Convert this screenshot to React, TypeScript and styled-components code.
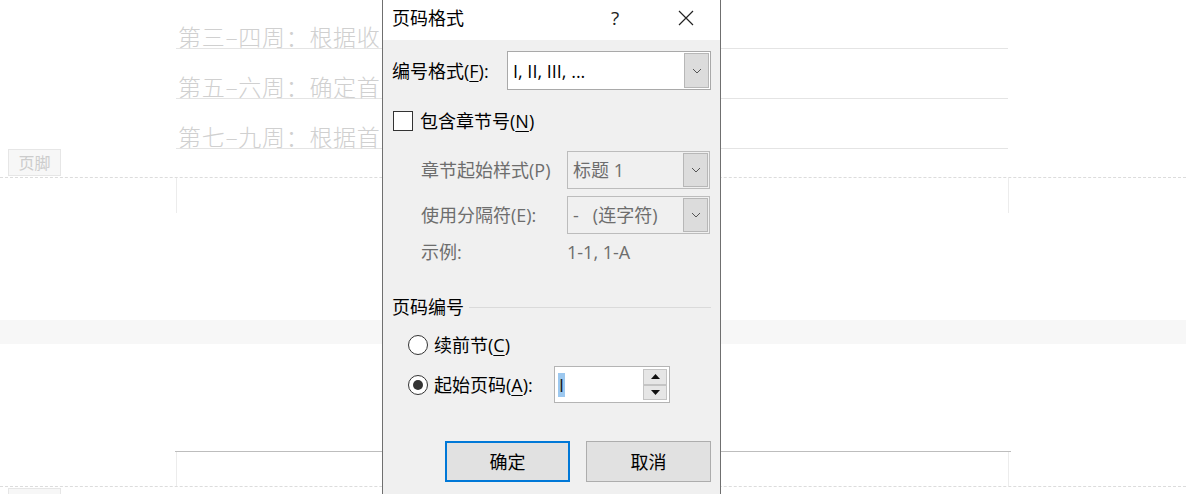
import React, { FC } from 'react';
import styled, { createGlobalStyle } from 'styled-components';

const GlobalStyle = createGlobalStyle`
    html, body {
        margin: 0;
        padding: 0;
        background: #ffffff;
    }
`

const UI_FONT = `"Open Sans", "Noto Sans CJK SC", sans-serif`;
const DOC_FONT = `"Noto Sans CJK SC", sans-serif`;

const Root = styled.div`
    position: relative;
    width: 1186px;
    height: 494px;
    overflow: hidden;
    background-color: #ffffff;
`

/* ---------- document behind the dialog ---------- */

const Doc = styled.div`
    display: flex;
    flex-direction: column;
`

const Lines = styled.div`
    margin-top: -1px;
    margin-left: 176px;
    width: 832px;
    display: flex;
    flex-direction: column;
`

const Line = styled.div`
    height: 49px;
    border-bottom: 1px solid #e4e4e4;
    display: flex;
    align-items: flex-end;
    padding-left: 2px;
    font-family: ${DOC_FONT};
    font-size: 23px;
    font-weight: 300;
    letter-spacing: 0.7px;
    line-height: 24px;
    color: #d0d0d0;
    white-space: pre;
`

const TagBar = styled.div<{ $dashed: 'top' | 'bottom' }>`
    height: 27px;
    display: flex;
    align-items: ${p => (p.$dashed === 'bottom' ? 'flex-end' : 'flex-start')};
    border-${p => p.$dashed}: 1px dashed #dcdcdc;
    padding-${p => (p.$dashed === 'top' ? 'top' : 'bottom')}: 1px;
`

const Tag = styled.div`
    margin-left: 8px;
    width: 51px;
    height: 25px;
    border: 1px solid #e6e6e6;
    background-color: #f7f7f7;
    color: #cccccc;
    font-family: ${DOC_FONT};
    font-size: 16px;
    line-height: 25px;
    text-align: center;
`

const PageMargin = styled.div<{ $height: number }>`
    margin-left: 176px;
    width: 831px;
    height: ${p => p.$height}px;
    border-left: 1px solid #ececec;
    border-right: 1px solid #ececec;
`

const PageBreak = styled.div`
    margin-top: 107px;
    height: 24px;
    background-color: #f7f7f7;
`

const NextPage = styled.div`
    margin-top: 107px;
    margin-left: 175px;
    width: 836px;
    border-top: 1px solid #bdbdbd;
    ${PageMargin} {
        margin-left: 1px;
    }
`

/* ---------- dialog ---------- */

const Dialog = styled.div`
    position: absolute;
    left: 382px;
    top: -1px;
    width: 337px;
    height: 520px;
    border: 1px solid #6f6f6f;
    background-color: #f0f0f0;
    font-family: ${UI_FONT};
    font-size: 18px;
    color: #000000;
    display: flex;
    flex-direction: column;
`

const TitleBar = styled.div`
    height: 40px;
    background-color: #ffffff;
    display: flex;
    align-items: center;
    padding-left: 9px;
    padding-bottom: 5px;
    box-sizing: border-box;
`

const Title = styled.div`
    flex: 1;
    line-height: 24px;
`

const HelpButton = styled.div`
    width: 20px;
    margin-right: 47px;
    font-size: 19px;
    line-height: 24px;
    color: #222;
`

const CloseButton = styled.div`
    width: 16px;
    height: 16px;
    margin-right: 26px;
    display: flex;
`

const Body = styled.div`
    padding: 11px 9px 0 9px;
    display: flex;
    flex-direction: column;
`

const Row = styled.div<{ $height: number; $top?: number }>`
    height: ${p => p.$height}px;
    margin-top: ${p => p.$top ?? 0}px;
    display: flex;
    align-items: center;
`

const Label = styled.span<{ $disabled?: boolean; $width?: number }>`
    line-height: 22px;
    white-space: nowrap;
    color: ${p => (p.$disabled ? '#6d6d6d' : '#000000')};
    ${p => (p.$width ? `width: ${p.$width}px;` : '')}
    u {
        text-decoration-thickness: 1px;
        text-underline-offset: 3px;
    }
`

const Combo = styled.div<{ $width: number; $disabled?: boolean }>`
    margin-left: auto;
    width: ${p => p.$width}px;
    height: 100%;
    box-sizing: border-box;
    border: 1px solid ${p => (p.$disabled ? '#bcbcbc' : '#a9a9a9')};
    background-color: ${p => (p.$disabled ? '#f0f0f0' : '#ffffff')};
    display: flex;
    align-items: center;
    padding: 1px;
`

const ComboText = styled.span<{ $disabled?: boolean }>`
    flex: 1;
    padding-left: 4px;
    line-height: 22px;
    color: ${p => (p.$disabled ? '#6d6d6d' : '#000000')};
    white-space: pre;
`

const ComboButton = styled.div`
    width: 25px;
    height: 100%;
    box-sizing: border-box;
    border: 1px solid #b7b7b7;
    background-color: #dcdcdc;
    display: flex;
    align-items: center;
    justify-content: center;
`

const CheckBox = styled.div`
    width: 20px;
    height: 20px;
    margin-left: 1px;
    margin-right: 7px;
    box-sizing: border-box;
    border: 1px solid #333333;
    background-color: #ffffff;
`

const Indented = styled.div`
    margin-top: 20px;
    padding-left: 29px;
    display: grid;
    grid-template-columns: 146px 143px;
    grid-template-rows: 38px 38px 22px;
    row-gap: 7px;
    align-items: center;
`

const GridCombo = styled(Combo)`
    margin-left: 0;
`

const SectionHeading = styled.div`
    margin-top: 32px;
    height: 24px;
    display: flex;
    align-items: center;
    line-height: 22px;
    &::after {
        content: '';
        flex: 1;
        height: 1px;
        margin-left: 5px;
        background-color: #dadada;
    }
`

const RadioGroup = styled.div`
    padding-left: 16px;
    display: flex;
    flex-direction: column;
`

const Radio = styled.div<{ $checked?: boolean }>`
    width: 20px;
    height: 20px;
    margin-right: 6px;
    box-sizing: border-box;
    border: 1px solid #333333;
    border-radius: 50%;
    background-color: #ffffff;
    display: flex;
    align-items: center;
    justify-content: center;
    &::after {
        content: '';
        display: ${p => (p.$checked ? 'block' : 'none')};
        width: 10px;
        height: 10px;
        border-radius: 50%;
        background-color: #333333;
    }
`

const Spinner = styled.div`
    width: 116px;
    height: 37px;
    box-sizing: border-box;
    border: 1px solid #b4b4b4;
    background-color: #ffffff;
    display: flex;
    align-items: center;
    padding: 2px;
`

const SpinText = styled.div`
    flex: 1;
    padding-left: 1px;
    display: flex;
`

const Selection = styled.span`
    background-color: #9cc8ef;
    color: #1a1a1a;
    line-height: 24px;
    padding: 0 1px;
`

const SpinButtons = styled.div`
    width: 24px;
    height: 100%;
    display: flex;
    flex-direction: column;
`

const SpinButton = styled.div`
    flex: 1;
    box-sizing: border-box;
    border: 1px solid #c4c4c4;
    background-color: #e6e6e6;
    display: flex;
    align-items: center;
    justify-content: center;
`

const Buttons = styled.div`
    margin-top: 38px;
    display: flex;
    justify-content: flex-end;
    gap: 16px;
`

const Button = styled.div<{ $primary?: boolean }>`
    width: 125px;
    height: 41px;
    box-sizing: border-box;
    border: ${p => (p.$primary ? '2px solid #0078d7' : '1px solid #adadad')};
    background-color: #e1e1e1;
    display: flex;
    align-items: center;
    justify-content: center;
    line-height: 22px;
`

const Chevron: FC = () => (
    <svg width="10" height="6" viewBox="0 0 10 6">
        <path d="M1 1 L5 5 L9 1" fill="none" stroke="#555" strokeWidth="1" />
    </svg>
);

const Triangle: FC<{ up?: boolean }> = ({ up }) => (
    <svg width="9" height="5" viewBox="0 0 9 5">
        <path d={up ? 'M0 5 L4.5 0 L9 5 Z' : 'M0 0 L4.5 5 L9 0 Z'} fill="#111" />
    </svg>
);

const App: FC = () => {
    // only the part left of the dialog is visible
    const lines = ['第三–四周：根据收', '第五–六周：确定首', '第七–九周：根据首'];

    return (
        <Root>
            <GlobalStyle />
            <Doc>
                <Lines>
                    {lines.map(text => (
                        <Line key={text}>{text}</Line>
                    ))}
                </Lines>
                <TagBar $dashed="bottom">
                    <Tag>页脚</Tag>
                </TagBar>
                <PageMargin $height={35} />
                <PageBreak />
                <NextPage>
                    <PageMargin $height={34} />
                </NextPage>
                <TagBar $dashed="top">
                    <Tag>页眉</Tag>
                </TagBar>
            </Doc>

            <Dialog>
                <TitleBar>
                    <Title>页码格式</Title>
                    <HelpButton>?</HelpButton>
                    <CloseButton>
                        <svg width="16" height="16" viewBox="0 0 16 16">
                            <path d="M1 1 L15 15 M15 1 L1 15" stroke="#222" strokeWidth="1.2" />
                        </svg>
                    </CloseButton>
                </TitleBar>
                <Body>
                    <Row $height={39}>
                        <Label>编号格式(<u>F</u>):</Label>
                        <Combo $width={204}>
                            <ComboText>I, II, III, ...</ComboText>
                            <ComboButton><Chevron /></ComboButton>
                        </Combo>
                    </Row>
                    <Row $height={20} $top={21}>
                        <CheckBox />
                        <Label>包含章节号(<u>N</u>)</Label>
                    </Row>
                    <Indented>
                        <Label $disabled>章节起始样式(P)</Label>
                        <GridCombo $width={143} $disabled>
                            <ComboText $disabled>标题 1</ComboText>
                            <ComboButton><Chevron /></ComboButton>
                        </GridCombo>
                        <Label $disabled>使用分隔符(E):</Label>
                        <GridCombo $width={143} $disabled>
                            <ComboText $disabled>{'-   (连字符)'}</ComboText>
                            <ComboButton><Chevron /></ComboButton>
                        </GridCombo>
                        <Label $disabled>示例:</Label>
                        <Label $disabled>1-1, 1-A</Label>
                    </Indented>
                    <SectionHeading>页码编号</SectionHeading>
                    <RadioGroup>
                        <Row $height={20} $top={16}>
                            <Radio />
                            <Label>续前节(<u>C</u>)</Label>
                        </Row>
                        <Row $height={37} $top={11}>
                            <Radio $checked />
                            <Label $width={120}>起始页码(<u>A</u>):</Label>
                            <Spinner>
                                <SpinText><Selection>I</Selection></SpinText>
                                <SpinButtons>
                                    <SpinButton><Triangle up /></SpinButton>
                                    <SpinButton><Triangle /></SpinButton>
                                </SpinButtons>
                            </Spinner>
                        </Row>
                    </RadioGroup>
                    <Buttons>
                        <Button $primary>确定</Button>
                        <Button>取消</Button>
                    </Buttons>
                </Body>
            </Dialog>
        </Root>
    );
}

export default App;
